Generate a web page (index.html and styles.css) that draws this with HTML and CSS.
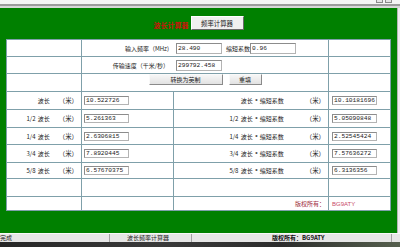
FILE: index.html
```html
<!DOCTYPE html>
<html lang="zh-CN">
<head>
    <meta charset="UTF-8">
    <title>波长频率计算器</title>
    <link rel="stylesheet" href="styles.css">
</head>
<body>
    <div class="titlebar">
        <span class="winbtn"></span>
        <span class="winbtn"></span>
    </div>
    <div class="window">
        <div class="page">
            <div class="header">
                <span class="header-title">波长计算器</span>
                <button class="tab-btn">频率计算器</button>
            </div>
            <table class="calc">
                <colgroup>
                    <col class="c1">
                    <col class="c2">
                    <col class="c3">
                    <col class="c4">
                </colgroup>
                <tr>
                    <td></td>
                    <td colspan="2">
                        <div class="field">
                            <span class="field-label">输入频率（MHz)</span>
                            <input class="box" type="text" value="28.490">
                            <span class="field-extra">缩短系数</span>
                            <input class="box" type="text" value="0.96">
                        </div>
                    </td>
                    <td></td>
                </tr>
                <tr>
                    <td></td>
                    <td colspan="2">
                        <div class="field">
                            <span class="field-label">传输速度（千米/秒）</span>
                            <input class="box" type="text" value="299792.458">
                        </div>
                    </td>
                    <td></td>
                </tr>
                <tr>
                    <td></td>
                    <td colspan="2">
                        <div class="actions">
                            <button class="btn btn-wide">转换为英制</button>
                            <button class="btn btn-narrow">重填</button>
                        </div>
                    </td>
                    <td></td>
                </tr>
                <tr>
                    <td class="lbl">波长<span class="unit">（米）</span></td>
                    <td class="val"><input class="box out" type="text" value="10.522726"></td>
                    <td class="lbl">波长 <span class="star">*</span> 缩短系数<span class="unit unit-wide">（米）</span></td>
                    <td class="val"><input class="box out" type="text" value="10.10181696"></td>
                </tr>
                <tr>
                    <td class="lbl">1/2 波长<span class="unit">（米）</span></td>
                    <td class="val"><input class="box out" type="text" value="5.261363"></td>
                    <td class="lbl">1/2 波长 <span class="star">*</span> 缩短系数<span class="unit unit-wide">（米）</span></td>
                    <td class="val"><input class="box out" type="text" value="5.05090848"></td>
                </tr>
                <tr>
                    <td class="lbl">1/4 波长<span class="unit">（米）</span></td>
                    <td class="val"><input class="box out" type="text" value="2.6306815"></td>
                    <td class="lbl">1/4 波长 <span class="star">*</span> 缩短系数<span class="unit unit-wide">（米）</span></td>
                    <td class="val"><input class="box out" type="text" value="2.52545424"></td>
                </tr>
                <tr>
                    <td class="lbl">3/4 波长<span class="unit">（米）</span></td>
                    <td class="val"><input class="box out" type="text" value="7.8920445"></td>
                    <td class="lbl">3/4 波长 <span class="star">*</span> 缩短系数<span class="unit unit-wide">（米）</span></td>
                    <td class="val"><input class="box out" type="text" value="7.57636272"></td>
                </tr>
                <tr>
                    <td class="lbl">5/8 波长<span class="unit">（米）</span></td>
                    <td class="val"><input class="box out" type="text" value="6.57670375"></td>
                    <td class="lbl">5/8 波长 <span class="star">*</span> 缩短系数<span class="unit unit-wide">（米）</span></td>
                    <td class="val"><input class="box out" type="text" value="6.3136356"></td>
                </tr>
                <tr>
                    <td></td><td></td><td></td><td></td>
                </tr>
                <tr>
                    <td></td>
                    <td></td>
                    <td class="lbl owner">版权所有：</td>
                    <td class="val owner-name">BG9ATY</td>
                </tr>
            </table>
        </div>
        <div class="scrollbar"></div>
    </div>
    <div class="statusbar">
        <span class="status-cell">完成</span>
        <span class="status-cell status-mid">波长频率计算器</span>
        <span class="status-cell status-right">版权所有：BG9ATY</span>
    </div>
    <div class="taskbar"></div>
</body>
</html>
```

FILE: styles.css
```css
* {
    box-sizing: border-box;
}
html, body {
    margin: 0;
}
body {
    width: 400px;
    height: 247px;
    overflow: hidden;
    font-family: "Noto Sans CJK SC", sans-serif;
    font-size: 6px;
    color: #222;
    background: #2d2d2d;
}
.titlebar {
    height: 8px;
    display: flex;
    justify-content: flex-end;
    gap: 2px;
    padding-right: 8px;
    background: linear-gradient(#f5f5f5 0, #f5f5f5 4px, #9c9c9c 4px, #9c9c9c 6px, #d8d8d8 6px);
}
.winbtn {
    width: 7px;
    height: 3px;
    border: 1px solid #8a8a8a;
    border-top: none;
    background: #e4e4e4;
}
.window {
    display: flex;
    height: 225px;
}
.page {
    flex: 1;
    background: #008000;
}
.scrollbar {
    width: 3px;
    background: #eeeeee;
    border-left: 1px solid #b5b5b5;
}
.header {
    height: 31px;
    display: flex;
    justify-content: center;
    align-items: flex-end;
    gap: 2px;
    padding-bottom: 9px;
}
.header-title {
    color: #c8140a;
    font-size: 7px;
    font-weight: bold;
    line-height: 8px;
    margin-bottom: 1px;
}
.tab-btn {
    width: 53px;
    height: 14px;
    padding: 0;
    font-family: inherit;
    font-size: 6.4px;
    color: #222;
    background: #f0f0f0;
    border: 1px solid #fff;
    border-right-color: #6a6a6a;
    border-bottom-color: #6a6a6a;
}
.calc {
    margin-left: 6px;
    width: 384px;
    border-collapse: collapse;
    table-layout: fixed;
    background: #fff;
}
.c1 { width: 75px; }
.c2 { width: 92px; }
.c3 { width: 155px; }
.c4 { width: 62px; }
.calc td {
    border: 1px solid #7fa0aa;
    padding: 0;
    vertical-align: middle;
    white-space: nowrap;
}
.calc tr { height: 17px; }
.calc tr:nth-child(3),
.calc tr:nth-child(4),
.calc tr:nth-child(5),
.calc tr:nth-child(7),
.calc tr:nth-child(9) { height: 18px; }
.calc tr:nth-child(8) { height: 16px; }
.calc tr:nth-child(10) { height: 14px; }
.field {
    display: flex;
    align-items: center;
}
.field-label {
    width: 87px;
    text-align: right;
    margin-right: 7px;
}
.field-extra {
    margin-left: 4px;
}
.box {
    width: 46px;
    height: 11px;
    padding: 0 0 0 1px;
    margin: 0;
    font-family: "Liberation Mono", monospace;
    font-size: 6.2px;
    color: #222;
    background: #fff;
    border: 1px solid #b4b4b4;
    border-top-color: #8c8c8c;
    border-left-color: #8c8c8c;
}
.box.out {
    width: 45px;
    height: 9px;
    display: block;
}
.actions {
    display: flex;
    justify-content: center;
    gap: 6px;
    padding-bottom: 6px;
}
.btn {
    height: 11px;
    padding: 0;
    font-family: inherit;
    font-size: 6px;
    color: #222;
    background: linear-gradient(#f6f6f6, #e2e2e2);
    border: 1px solid #fafafa;
    border-right-color: #8a8a8a;
    border-bottom-color: #8a8a8a;
}
.btn-wide { width: 74px; }
.btn-narrow { width: 33px; }
.lbl {
    text-align: right;
    padding-right: 3px !important;
    word-spacing: 1px;
}
.star {
    font-family: "Liberation Sans", sans-serif;
    font-size: 6px;
    font-weight: bold;
}
.unit {
    margin-left: 9px;
    font-size: 6.4px;
}
.unit-wide {
    margin-left: 22px;
}
.val {
    padding-left: 2px !important;
}
.calc td.val:nth-child(4) {
    padding-left: 3px !important;
}
.owner {
    color: #9e2a3c;
}
.owner-name {
    color: #c84a68;
    font-family: "Liberation Sans", sans-serif;
    font-size: 6px;
}
.statusbar {
    height: 9px;
    display: flex;
    line-height: 8px;
    background: #e6e6e6;
    border-top: 1px solid #f8f8f8;
}
.status-cell {
    width: 110px;
    border-right: 1px solid #a2a2a2;
}
.status-mid {
    width: 82px;
    padding-left: 17px;
}
.status-right {
    width: 200px;
    padding-left: 80px;
    color: #111;
    font-weight: bold;
}
.taskbar {
    height: 5px;
    background: linear-gradient(90deg, #262626 0, #3a3a3a 40%, #2c2c2c 70%, #56604e 100%);
}
```
